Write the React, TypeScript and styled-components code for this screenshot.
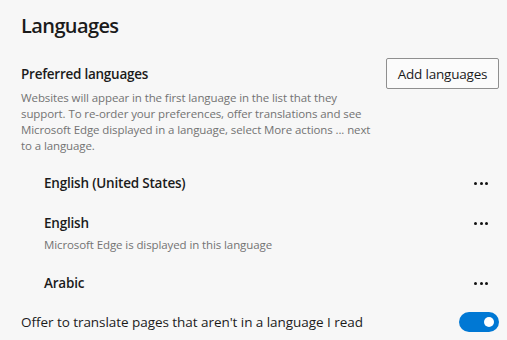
import React from "react";
import styled, { createGlobalStyle } from "styled-components";

const GlobalStyle = createGlobalStyle`
  * {
    box-sizing: border-box;
    margin: 0;
    padding: 0;
  }
  body {
    background: #f7f7f7;
    font-family: "Open Sans", "Noto Sans", sans-serif;
    color: #1b1b1b;
  }
`;

const Page = styled.div`
  width: 507px;
  height: 340px;
  overflow: hidden;
  padding: 12px 8px 0 21px;
`;

const Title = styled.h1`
  font-size: 20px;
  font-weight: 600;
  line-height: 28px;
  letter-spacing: -0.6px;
`;

const Header = styled.div`
  display: flex;
  justify-content: space-between;
  align-items: flex-start;
  margin-top: 18px;
`;

const HeaderText = styled.div`
  width: 360px;
  padding-top: 6px;
`;

const SectionTitle = styled.h2`
  font-size: 13.5px;
  font-weight: 600;
  line-height: 20px;
  letter-spacing: -0.25px;
`;

const Description = styled.p`
  margin-top: 6px;
  font-size: 11.5px;
  line-height: 16px;
  color: #737373;
  letter-spacing: -0.1px;
`;

const AddButton = styled.button`
  width: 113px;
  height: 31px;
  background: #fbfbfb;
  border: 1px solid #8f8f8f;
  border-radius: 2px;
  font-family: inherit;
  font-size: 13.5px;
  color: #1b1b1b;
  letter-spacing: -0.2px;
`;

const List = styled.div`
  margin-top: 9px;
  display: flex;
  flex-direction: column;
`;

const LangRow = styled.div`
  display: flex;
  justify-content: space-between;
  align-items: flex-start;
  padding: 10px 11px 10px 23px;
  min-height: 40px;
`;

const LangInfo = styled.div`
  display: flex;
  flex-direction: column;
`;

const LangName = styled.span`
  font-size: 13.5px;
  font-weight: 600;
  line-height: 20px;
  letter-spacing: -0.2px;
`;

const LangNote = styled.span`
  margin-top: 4px;
  font-size: 11.5px;
  line-height: 16px;
  color: #737373;
  letter-spacing: -0.1px;
`;

const MoreButton = styled.span`
  display: flex;
  gap: 2.5px;
  align-items: center;
  height: 20px;
`;

const Dot = styled.span`
  width: 3px;
  height: 3px;
  border-radius: 50%;
  background: #111;
`;

const ToggleRow = styled.div`
  display: flex;
  justify-content: space-between;
  align-items: center;
  margin-top: 9px;
`;

const ToggleLabel = styled.span`
  font-size: 13.5px;
  line-height: 20px;
  letter-spacing: -0.05px;
`;

const Toggle = styled.span<{ $on: boolean }>`
  width: 40px;
  height: 20px;
  border-radius: 10px;
  background: ${(p) => (p.$on ? "#0078d4" : "#fff")};
  display: flex;
  align-items: center;
  justify-content: ${(p) => (p.$on ? "flex-end" : "flex-start")};
  padding: 0 5px;
`;

const Knob = styled.span`
  width: 10px;
  height: 10px;
  border-radius: 50%;
  background: #fff;
`;

const More = () => (
  <MoreButton>
    <Dot />
    <Dot />
    <Dot />
  </MoreButton>
);

const languages = [
  { name: "English (United States)" },
  { name: "English", note: "Microsoft Edge is displayed in this language" },
  { name: "Arabic" },
];

export default function App() {
  return (
    <>
      <GlobalStyle />
      <Page>
        <Title>Languages</Title>
        <Header>
          <HeaderText>
            <SectionTitle>Preferred languages</SectionTitle>
            <Description>
              Websites will appear in the first language in the list that they
              support. To re-order your preferences, offer translations and see
              Microsoft Edge displayed in a language, select More actions ... next
              to a language.
            </Description>
          </HeaderText>
          <AddButton>Add languages</AddButton>
        </Header>
        <List>
          {languages.map((l) => (
            <LangRow key={l.name}>
              <LangInfo>
                <LangName>{l.name}</LangName>
                {l.note && <LangNote>{l.note}</LangNote>}
              </LangInfo>
              <More />
            </LangRow>
          ))}
        </List>
        <ToggleRow>
          <ToggleLabel>Offer to translate pages that aren't in a language I read</ToggleLabel>
          <Toggle $on>
            <Knob />
          </Toggle>
        </ToggleRow>
      </Page>
    </>
  );
}
